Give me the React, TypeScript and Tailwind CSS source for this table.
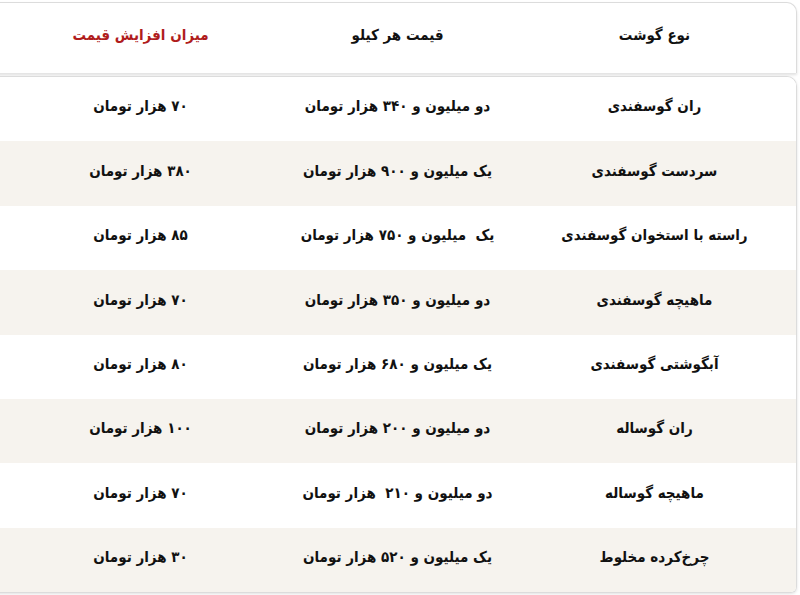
import React from "react"

const rows = [
  ["ران گوسفندی", "دو میلیون و ۳۴۰ هزار تومان", "۷۰ هزار تومان"],
  ["سردست گوسفندی", "یک میلیون و ۹۰۰ هزار تومان", "۳۸۰ هزار تومان"],
  ["راسته با استخوان گوسفندی", "یک  میلیون و ۷۵۰ هزار تومان", "۸۵ هزار تومان"],
  ["ماهیچه گوسفندی", "دو میلیون و ۳۵۰ هزار تومان", "۷۰ هزار تومان"],
  ["آبگوشتی گوسفندی", "یک میلیون و ۶۸۰ هزار تومان", "۸۰ هزار تومان"],
  ["ران گوساله", "دو میلیون و ۲۰۰ هزار تومان", "۱۰۰ هزار تومان"],
  ["ماهیچه گوساله", "دو میلیون و ۲۱۰  هزار تومان", "۷۰ هزار تومان"],
  ["چرخ‌کرده مخلوط", "یک میلیون و ۵۲۰ هزار تومان", "۳۰ هزار تومان"],
]

export default function App() {
  return (
    <div
      dir="rtl"
      className="w-[800px] h-[595px] bg-white overflow-hidden pt-[2px] pl-0 pr-[3px] text-[15px] font-bold text-[#111]"
      style={{ fontFamily: '"DejaVu Sans Condensed", "DejaVu Sans", sans-serif' }}
    >
      {/* header */}
      <div className="-ml-4 h-[71px] pb-[5px] bg-white border-t border-r border-[#dcdcdc] rounded-tr-[10px] shadow-[0_2px_3px_rgba(0,0,0,0.12)] grid grid-cols-3 items-center pr-[13px] pl-[28px]">
        <div className="text-center">نوع گوشت</div>
        <div className="text-center">قیمت هر کیلو</div>
        <div className="text-center text-[#b01c1c]">میزان افزایش قیمت</div>
      </div>

      {/* body */}
      <div className="-ml-4 mt-[3px] border-t border-r border-b border-[#dcdcdc] rounded-tr-[10px] rounded-br-[6px] overflow-hidden shadow-[0_1px_3px_rgba(0,0,0,0.12)]">
        {rows.map((r, i) => (
          <div
            key={i}
            className={
              "h-[64.4px] pb-[5px] grid grid-cols-3 items-center pr-[13px] pl-[28px] " +
              (i % 2 === 1 ? "bg-[#f6f3ee]" : "bg-white")
            }
          >
            <div className="text-center whitespace-pre">{r[0]}</div>
            <div className="text-center whitespace-pre">{r[1]}</div>
            <div className="text-center whitespace-pre">{r[2]}</div>
          </div>
        ))}
      </div>
    </div>
  )
}
